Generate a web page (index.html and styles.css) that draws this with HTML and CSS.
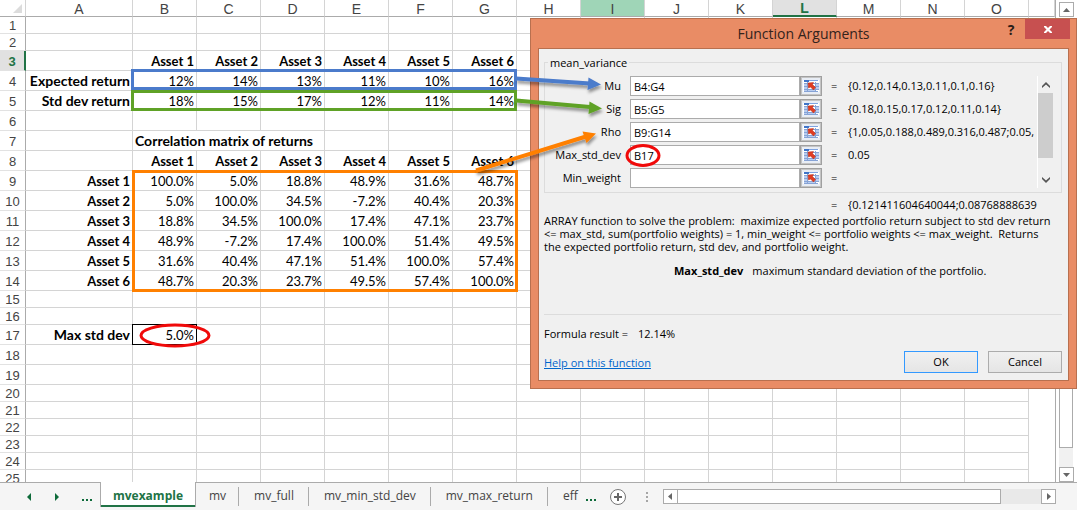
FILE: index.html
```html
<!DOCTYPE html>
<html lang="en">
<head>
<meta charset="utf-8">
<title>Function Arguments</title>
<link rel="stylesheet" href="styles.css">
</head>
<body>
<svg class="defs" aria-hidden="true">
  <symbol id="picker" viewBox="0 0 16 14">
    <path fill="#fff" d="M0 1h16v12H0z"/>
    <path fill="#b9cdf0" d="M1 5h3v2H1zM1 8h3v2H1zM13 5h3v2h-3zM13 8h3v2h-3zM5 11h7v1H5zM1 11h3v1H1z"/>
    <path stroke="#86a3d6" fill="none" d="M1 4.500h15M1 7.500h15M1 10.500h15M1 12.500h14M4.500 3v10M12.500 3v10"/>
    <path fill="#3f74c8" d="M1 1h5v2H1z"/>
    <path fill="#7fa3e0" d="M6 1h9v1H6z"/>
    <path fill="#e03c22" stroke="#b42d18" stroke-width=".5" d="M5 4 10.500 3.500 9.500 5.500 12.500 8.500 10.500 11 7.500 8 5.500 9z"/>
  </symbol>
</svg>
<main class="workbook">
  <div class="view">
    <div class="sheet">
      <table class="grid">
        <colgroup><col class="c-num"><col class="c-a"><col span="14" class="c-std"><col></colgroup>
        <thead>
          <tr><th class="corner"><svg width="9" height="9" aria-hidden="true"><path fill="#dcdcdc" d="M9 0v9H0z"/></svg></th><th>A</th><th>B</th><th>C</th><th>D</th><th>E</th><th>F</th><th>G</th><th>H</th><th class="hot">I</th><th>J</th><th>K</th><th class="sel">L</th><th>M</th><th>N</th><th>O</th><th></th></tr>
        </thead>
        <tbody>
          <tr><th>1</th><td><td><td><td><td><td><td><td><td><td><td><td><td><td><td></tr>
          <tr><th>2</th><td><td><td><td><td><td><td><td><td><td><td><td><td><td><td></tr>
          <tr class="tall bold"><th class="sel">3</th><td><td>Asset 1<td>Asset 2<td>Asset 3<td>Asset 4<td>Asset 5<td>Asset 6<td><td><td><td><td><td><td><td></tr>
          <tr class="tall"><th>4</th><td class="caption">Expected return<td>12%<td>14%<td>13%<td>11%<td>10%<td>16%<td><td><td><td><td><td><td><td><td></tr>
          <tr class="tall"><th>5</th><td class="caption">Std dev return<td>18%<td>15%<td>17%<td>12%<td>11%<td>14%<td><td><td><td><td><td><td><td><td></tr>
          <tr class="tall"><th>6</th><td><td><td><td><td><td><td><td><td><td><td><td><td><td><td></tr>
          <tr class="tall bold"><th>7</th><td><td colspan="3" class="caption left">Correlation matrix of returns<td><td><td><td><td><td><td><td><td><td><td></tr>
          <tr class="tall bold"><th>8</th><td><td>Asset 1<td>Asset 2<td>Asset 3<td>Asset 4<td>Asset 5<td>Asset 6<td><td><td><td><td><td><td><td><td></tr>
          <tr class="tall"><th>9</th><td>Asset 1<td>100.0%<td>5.0%<td>18.8%<td>48.9%<td>31.6%<td>48.7%<td><td><td><td><td><td><td><td><td></tr>
          <tr class="tall"><th>10</th><td>Asset 2<td>5.0%<td>100.0%<td>34.5%<td>-7.2%<td>40.4%<td>20.3%<td><td><td><td><td><td><td><td><td></tr>
          <tr class="tall"><th>11</th><td>Asset 3<td>18.8%<td>34.5%<td>100.0%<td>17.4%<td>47.1%<td>23.7%<td><td><td><td><td><td><td><td><td></tr>
          <tr class="tall"><th>12</th><td>Asset 4<td>48.9%<td>-7.2%<td>17.4%<td>100.0%<td>51.4%<td>49.5%<td><td><td><td><td><td><td><td><td></tr>
          <tr class="tall"><th>13</th><td>Asset 5<td>31.6%<td>40.4%<td>47.1%<td>51.4%<td>100.0%<td>57.4%<td><td><td><td><td><td><td><td><td></tr>
          <tr class="tall"><th>14</th><td>Asset 6<td>48.7%<td>20.3%<td>23.7%<td>49.5%<td>57.4%<td>100.0%<td><td><td><td><td><td><td><td><td></tr>
          <tr><th>15</th><td><td><td><td><td><td><td><td><td><td><td><td><td><td><td></tr>
          <tr><th>16</th><td><td><td><td><td><td><td><td><td><td><td><td><td><td><td></tr>
          <tr class="tall"><th>17</th><td class="caption">Max std dev<td class="boxed">5.0%<td><td><td><td><td><td><td><td><td><td><td><td><td></tr>
          <tr class="tall"><th>18</th><td><td><td><td><td><td><td><td><td><td><td><td><td><td><td></tr>
          <tr class="tall"><th>19</th><td><td><td><td><td><td><td><td><td><td><td><td><td><td><td></tr>
          <tr><th>20</th><td><td><td><td><td><td><td><td><td><td><td><td><td><td><td></tr>
          <tr><th>21</th><td><td><td><td><td><td><td><td><td><td><td><td><td><td><td></tr>
          <tr><th>22</th><td><td><td><td><td><td><td><td><td><td><td><td><td><td><td></tr>
          <tr><th>23</th><td><td><td><td><td><td><td><td><td><td><td><td><td><td><td></tr>
          <tr><th>24</th><td><td><td><td><td><td><td><td><td><td><td><td><td><td><td></tr>
          <tr><th>25</th><td><td><td><td><td><td><td><td><td><td><td><td><td><td><td></tr>
        </tbody>
      </table>
    </div>
    <div class="vbar">
      <button class="step" aria-label="Scroll up"><svg width="7" height="4"><path d="M0 4 3.500 0 7 4z"/></svg></button>
      <div class="vthumb"></div>
      <div class="vtrack"></div>
      <button class="step" aria-label="Scroll down"><svg width="7" height="4"><path d="M0 0h7L3.500 4z"/></svg></button>
    </div>
  </div>

  <nav class="tabs">
    <div class="navs">
      <button class="nav" aria-label="Previous sheets"><svg width="4" height="8"><path d="M4 0v8L0 4z"/></svg></button>
      <button class="nav" aria-label="Next sheets"><svg width="4" height="8"><path d="M0 0v8l4-4z"/></svg></button>
      <button class="nav dots" aria-label="More sheets"><svg width="10" height="2"><path d="M0 0h2v2H0zM4 0h2v2H4zM8 0h2v2H8z"/></svg></button>
    </div>
    <button class="tab active">mvexample</button>
    <button class="tab short">mv</button>
    <button class="tab">mv_full</button>
    <button class="tab">mv_min_std_dev</button>
    <button class="tab">mv_max_return</button>
    <button class="tab last">eff</button>
    <button class="nav dots" aria-label="Following sheets"><svg width="10" height="2"><path d="M0 0h2v2H0zM4 0h2v2H4zM8 0h2v2H8z"/></svg></button>
    <button class="add" aria-label="New sheet"><svg width="16" height="16"><circle cx="8" cy="8" r="7.500" fill="#fff" stroke="#777"/><path fill="#666" d="M7 4h2v3h3v2H9v3H7V9H4V7h3z"/></svg></button>
    <svg class="grip" width="2" height="10" aria-hidden="true"><path fill="#a6a6a6" d="M0 0h2v2H0zM0 4h2v2H0zM0 8h2v2H0z"/></svg>
    <div class="hbar">
      <button class="step" aria-label="Scroll left"><svg width="4" height="7"><path d="M4 0v7L0 3.500z"/></svg></button>
      <div class="hthumb"></div>
      <div class="htrack"></div>
      <button class="step" aria-label="Scroll right"><svg width="4" height="7"><path d="M0 0v7l4-3.500z"/></svg></button>
    </div>
  </nav>

  <form class="dialog" role="dialog" aria-labelledby="title">
    <header class="titlebar">
      <h1 id="title">Function Arguments</h1>
      <button type="button" class="help" aria-label="Help">?</button>
      <button type="button" class="close" aria-label="Close"><svg width="8" height="7"><path d="M0 0h2l2 2 2-2h2v1L5.500 3.500 8 6v1H6L4 5 2 7H0V6l2.500-2.500L0 1z"/></svg></button>
    </header>
    <div class="panel">
      <fieldset class="args">
        <legend>mean_variance</legend>
        <div class="rows">
          <div class="row"><label for="mu">Mu</label><div class="ref"><input id="mu" value="B4:G4"><button type="button" aria-label="Select Mu range"><svg><use href="#picker"/></svg></button></div><span>=</span><output>{0.12,0.14,0.13,0.11,0.1,0.16}</output></div>
          <div class="row"><label for="sig">Sig</label><div class="ref"><input id="sig" value="B5:G5"><button type="button" aria-label="Select Sig range"><svg><use href="#picker"/></svg></button></div><span>=</span><output>{0.18,0.15,0.17,0.12,0.11,0.14}</output></div>
          <div class="row"><label for="rho">Rho</label><div class="ref"><input id="rho" value="B9:G14"><button type="button" aria-label="Select Rho range"><svg><use href="#picker"/></svg></button></div><span>=</span><output>{1,0.05,0.188,0.489,0.316,0.487;0.05,</output></div>
          <div class="row"><label for="max">Max_std_dev</label><div class="ref"><input id="max" value="B17"><button type="button" aria-label="Select Max_std_dev range"><svg><use href="#picker"/></svg></button></div><span>=</span><output>0.05</output></div>
          <div class="row"><label for="min">Min_weight</label><div class="ref"><input id="min"><button type="button" aria-label="Select Min_weight range"><svg><use href="#picker"/></svg></button></div><span>=</span><output></output></div>
        </div>
        <div class="argbar">
          <button type="button" aria-label="Previous argument"><svg width="8" height="6"><path d="M0 4 4 0l4 4v2L4 2.500 0 6z"/></svg></button>
          <div class="argthumb"></div>
          <button type="button" aria-label="Next argument"><svg width="8" height="6"><path d="M0 2l4 4 4-4V0L4 3.500 0 0z"/></svg></button>
        </div>
      </fieldset>
      <div class="row result"><span>=</span><output>{0.121411604640044;0.08768888639</output></div>
      <p class="about">ARRAY function to solve the problem:&nbsp; maximize expected portfolio return subject to std dev return<br>&lt;= max_std, sum(portfolio weights) = 1, min_weight &lt;= portfolio weights &lt;= max_weight.&nbsp; Returns<br>the expected portfolio return, std dev, and portfolio weight.</p>
      <p class="arg"><strong>Max_std_dev</strong><span>maximum standard deviation of the portfolio.</span></p>
      <p class="formula"><span>Formula result =</span><span>12.14%</span></p>
      <footer class="actions">
        <a href="#help">Help on this function</a>
        <button type="button" class="btn primary">OK</button>
        <button type="button" class="btn">Cancel</button>
      </footer>
    </div>
  </form>

  <svg class="notes" width="1077" height="510" aria-hidden="true">
    <defs><filter id="shade" x="-10%" y="-60%" width="125%" height="260%"><feDropShadow dx="1" dy="3" stdDeviation="1.500" flood-opacity=".4"/></filter></defs>
    <g fill="none" stroke-width="3">
      <path stroke="#4b7bcb" d="M132.500 70.500h383v18h-383z"/>
      <path stroke="#5fa226" d="M132.500 91.500h383v18h-383z"/>
      <path stroke="#ff8000" d="M133.500 171.500h383v119h-383z"/>
    </g>
    <g filter="url(#shade)" fill="#4b7bcb"><path stroke="#4b7bcb" stroke-width="4" d="M516 78.500 590 83.500"/><path d="M588.500 77.500 601 84.500 587.500 90z"/></g>
    <g filter="url(#shade)" fill="#5fa226"><path stroke="#5fa226" stroke-width="4" d="M516 100.500 590 107"/><path d="M589.500 101.500 602 108.500 588.500 114z"/></g>
    <g filter="url(#shade)" fill="#ff8000"><path stroke="#ff8000" stroke-width="4" d="M476 170.500 586 136.500"/><path d="M582.500 131.500 596 133.500 586.500 143z"/></g>
    <g fill="none" stroke="#f00a0a" stroke-width="3"><ellipse cx="643" cy="155.500" rx="16" ry="10"/><ellipse cx="175" cy="335.500" rx="34" ry="10.500"/></g>
  </svg>
</main>
</body>
</html>
```
FILE: styles.css
```css
* { box-sizing: border-box; }
body { margin: 0; background: #fff; font-family: "Open Sans", "Noto Sans", sans-serif; font-size: 12px; color: #000; }
button { padding: 0; border: 0; background: none; font: inherit; color: inherit; display: flex; align-items: center; justify-content: center; }
.defs { position: absolute; width: 0; height: 0; }

.workbook { position: relative; display: flex; flex-direction: column; height: 100vh; overflow: hidden; }
.view { flex: 1; min-height: 0; display: flex; }
.sheet { flex: 1; min-width: 0; overflow: hidden; border-right: 1px solid #ababab; }

.grid { width: 100%; table-layout: fixed; border-spacing: 0; font-family: Lato, sans-serif; font-size: 13px; line-height: 16px; }
.c-num { width: 26px; }
.c-a { width: 107px; }
.c-std { width: 64px; }
.grid tr { height: 17px; }
.grid .tall { height: 20px; }
.grid th { padding: 0; font-family: "Liberation Sans", Arial, sans-serif; font-weight: 400; color: #444; text-align: center; }
.grid thead th { font-size: 14px; border-right: 1px solid #d4d4d4; border-bottom: 1px solid #ababab; }
.grid thead th:not(.corner) { padding-top: 2px; line-height: 14px; }
.grid thead .corner { vertical-align: bottom; line-height: 9px; padding: 0 3px 3px 0; }
.corner svg { display: block; margin-left: auto; }
.grid tbody th { padding-top: 2px; line-height: 14px; font-size: 13px; border-right: 1px solid #ababab; border-bottom: 1px solid #e2e2e2; }
.grid thead .hot { background: #9fd5b7; }
.grid thead .sel:not(.corner) { background: #e1e1e1; color: #217346; border-bottom: 2px solid #217346; font-weight: 700; line-height: 13px; }
.grid tbody .sel { background: #e1e1e1; color: #217346; border-right: 2px solid #217346; font-weight: 700; }
.grid td { padding: 0 2px; text-align: right; white-space: nowrap; border-right: 1px solid #d4d4d4; border-bottom: 1px solid #d4d4d4; }
.grid .tall td { padding-top: 1px; }
.grid .bold td, .grid td:nth-child(2) { font-weight: 700; }
.grid td.caption { font-size: 14px; }
.grid td.left { text-align: left; }
.grid td.boxed { border-color: #000; box-shadow: -1px 0 #000, 0 -1px #000, -1px -1px #000; }

.vbar { width: 21px; padding: 2px 4px 0 3px; display: flex; flex-direction: column; }
.step { flex: none; width: 15px; height: 15px; border: 1px solid #ababab; background: #fff; fill: #666; }
.vthumb { flex: 1; border: 1px solid #ababab; margin-top: 2px; }
.vtrack { height: 19px; background: #f1f1f1; }

.tabs { flex: none; display: flex; align-items: stretch; height: 28px; background: #f5f5f5; border-top: 1px solid #ababab; font-size: 12px; color: #444; }
.navs { width: 100px; padding: 0 8px 0 27px; display: flex; justify-content: space-between; }
.nav { fill: #0e6b3a; }
.nav.dots { padding-top: 6px; }
.tab { position: relative; padding: 0 15px 2px; }
.tab.short { padding: 0 13px 2px; }
.tab:not(.active):not(.last)::after { content: ""; position: absolute; right: 0; top: 4px; bottom: 4px; border-right: 1px solid #ababab; }
.tab.active { width: 96px; height: 25px; margin-top: -1px; padding: 2px 0 0; background: #fff; border: solid #ababab; border-width: 0 1px; box-shadow: inset 0 -2px #217346; color: #217346; font-weight: 700; }
.tab.last { padding-right: 8px; }
.add { width: 44px; }
.grip { align-self: center; margin: 0 15px 0 6px; }
.hbar { flex: 1; display: flex; align-items: center; margin-right: 21px; }
.hthumb { flex: 8; height: 15px; background: #fff; border: 1px solid #ababab; border-left: 0; }
.htrack { flex: 1; height: 15px; background: #e9e9e9; }

.dialog { position: absolute; top: 18px; right: 0; width: 547px; padding: 0 7px 7px; background: #e98c65; border: 1px solid #b8704f; font-size: 11px; line-height: 13px; }
.titlebar { display: flex; align-items: flex-start; height: 29px; margin-right: -1px; }
.titlebar h1 { flex: 1; margin: 0; padding: 5px 0 0 72px; font-size: 14px; line-height: 20px; font-weight: 400; text-align: center; color: #33231c; }
.help { width: 28px; height: 20px; font-size: 14px; font-weight: 700; color: #2b1d18; }
.close { width: 45px; height: 20px; background: #c75050; fill: #fff; }
.panel { background: #f0f0f0; border: 1px solid #b8704f; padding: 7px 6px 7px 5px; }
.args { display: flex; margin: 0; min-width: 0; padding: 7px 8px 4px 0; border: 1px solid #dcdcdc; }
.args legend { margin-left: 3px; padding: 0 2px; }
.rows { flex: 1; min-width: 0; display: grid; gap: 3px; }
.row { display: grid; grid-template-columns: 76px 192px 8px minmax(0, 1fr); column-gap: 9px; align-items: center; height: 20px; }
.row label { text-align: right; }
.row label, .row output, .row span { padding-bottom: 2px; }
.row output { overflow: hidden; white-space: nowrap; }
.ref { display: flex; height: 20px; }
.ref input { flex: 1; min-width: 0; height: 20px; padding: 0 3px; border: 1px solid #ababab; background: #fff; font: inherit; }
.ref button { width: 22px; border: 1px solid #a0a0a0; box-shadow: inset 0 0 0 1px #c4c4c4; background: #e8edf5; }
.ref svg { width: 16px; height: 14px; }
.argbar { width: 16px; display: flex; flex-direction: column; border-left: 1px solid #fff; }
.argbar button { height: 17px; fill: #555; }
.argthumb { height: 65px; background: #cdcdcd; margin-bottom: auto; }
.result { grid-template-columns: 8px minmax(0, 1fr); padding-left: 287px; margin-top: 3px; height: 18px; }
.panel p { margin: 0; }
.about { white-space: nowrap; }
.arg { display: flex; gap: 9px; }
.panel .arg { padding: 11px 0 37px 130px; border-bottom: 1px solid #dcdcdc; }
.panel .formula { display: flex; gap: 10px; padding-top: 12px; }
.actions { display: flex; align-items: center; gap: 10px; margin-top: 11px; }
.actions a { margin-right: auto; color: #0066cc; }
.btn { width: 74px; height: 22px; padding-bottom: 2px; border: 1px solid #acacac; background: linear-gradient(#f0f0f0, #e5e5e5); }
.btn.primary { border-color: #3399ff; }

.notes { position: absolute; left: 0; top: 0; pointer-events: none; }
```
